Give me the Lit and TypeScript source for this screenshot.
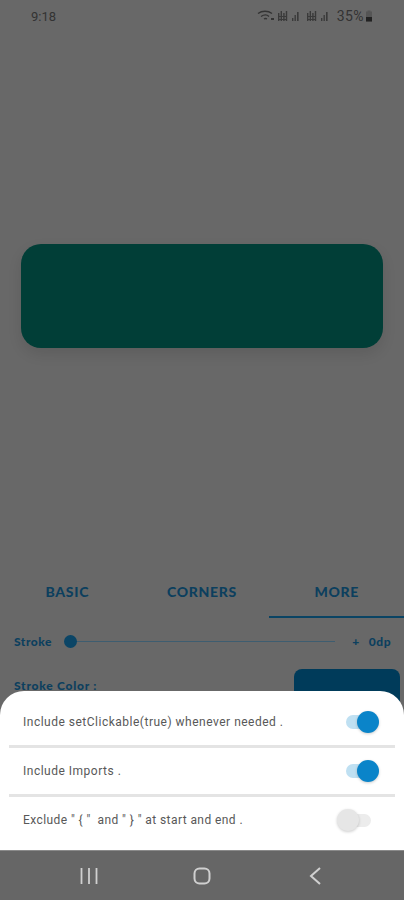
import { LitElement, html, css, svg } from "lit";
import { customElement } from "lit/decorators.js";

const bars = svg`<svg class="sig" viewBox="0 0 26 12" width="26" height="12">
  <g fill="#333" opacity=".85">
    <rect x="0" y="3" width="1.4" height="8"/><rect x="2.6" y="1" width="1.4" height="10"/><rect x="5.2" y="3" width="1.4" height="8"/><rect x="7.8" y="1" width="1.4" height="10"/>
    <rect x="0" y="6" width="9" height="1"/><rect x="0" y="9" width="9" height="1"/>
    <path d="M14 11h1.4V8H14zM16.5 11h1.4V5h-1.4zM19 11h1.6V2H19z"/>
  </g></svg>`;

@customElement("app-toggle")
class AppToggle extends LitElement {
  static properties = { on: { type: Boolean } };
  on = false;
  static styles = css`
    :host { display: block; width: 34px; height: 24px; position: relative; }
    .track { position: absolute; left: 1px; right: 1px; top: 5px; height: 14px; border-radius: 7px; background: #bfe0f2; }
    .knob { position: absolute; top: 1px; left: 12px; width: 22px; height: 22px; border-radius: 50%; background: #0a84c9; box-shadow: 0 1px 3px rgba(0,0,0,.2); }
    .off .track { background: #ececec; left: 3px; right: 0; top: 6px; height: 13px; }
    .off .knob { left: 0; background: #e6e6e6; top: 1px; }
  `;
  render() {
    return html`<div class=${this.on ? "on" : "off"}><div class="track"></div><div class="knob"></div></div>`;
  }
}

@customElement("app-root")
class AppRoot extends LitElement {
  static styles = css`
    :host { display: block; width: 404px; height: 900px; position: relative; overflow: hidden; background: #686868; font-family: "Lato", "Open Sans", sans-serif; }
    .page { display: flex; flex-direction: column; height: 900px; }
    .status { height: 32px; display: flex; align-items: center; justify-content: space-between; padding: 0 31px 0 31px; color: #333; font: 400 13px "Roboto", sans-serif; box-sizing: border-box; }
    .status .right { display: flex; align-items: center; gap: 3px; }
    .pct { font-size: 14px; letter-spacing: .4px; margin-left: 1px; margin-right: -2px; }
    .stage { height: 520px; padding-top: 212px; box-sizing: border-box; }
    .card { margin: 0 21px; height: 104px; border-radius: 20px; background: #013e37; box-shadow: 0 6px 14px rgba(0,0,0,.1); }
    .tabs { display: flex; height: 66px; }
    .tab { flex: 1; display: flex; align-items: flex-start; justify-content: center; padding-top: 31px; box-sizing: border-box; font-weight: 900; font-size: 14px; letter-spacing: .7px; color: #0c3f5e; border-bottom: 2px solid transparent; }
    .tab.active { border-bottom-color: #0a4464; }
    .strokeRow { display: flex; align-items: center; height: 22px; margin-top: 12px; padding: 0 13px 0 14px; color: #0c3f5e; font-weight: 900; font-size: 12px; letter-spacing: .5px; }
    .slider { flex: 1; position: relative; height: 1px; background: #3e5d70; margin: 0 17px 0 17px; }
    .thumb { position: absolute; left: -5px; top: -6px; width: 13px; height: 13px; border-radius: 50%; background: #0b4566; }
    .plus { margin-right: 9px; }
    .colorRow { display: flex; justify-content: space-between; padding: 17px 4px 0 14px; color: #0c3f5e; font-weight: 900; font-size: 12px; letter-spacing: .75px; }
    .colorRow span { padding-top: 9px; }
    .swatch { width: 106px; height: 60px; border-radius: 8px; background: #003b5a; }
    .sheet { position: absolute; left: 0; right: 0; top: 691px; height: 159px; background: #fff; border-radius: 24px 24px 0 0; box-sizing: border-box; padding: 0 9px; }
    .row { height: 46px; display: flex; align-items: center; justify-content: space-between; padding: 0 16px 0 14px; box-sizing: border-box; font: 400 12px "Roboto", sans-serif; letter-spacing: .5px; color: #585858; }
    .row.first { height: 54px; padding-top: 8px; }
    .row.last { padding-right: 24px; letter-spacing: .42px; }
    .rule { height: 3px; background: #e4e4e4; }
    .nav { position: absolute; left: 0; right: 0; top: 850px; height: 50px; background: #666; display: flex; align-items: center; justify-content: center; box-sizing: border-box; border-top: 1px solid #8a8a8a; }
    .nav div { width: 113px; display: flex; justify-content: center; }
    svg { display: block; }
  `;

  render() {
    return html`
      <div class="page">
        <div class="status">
          <span>9:18</span>
          <div class="right">
            <svg viewBox="0 0 18 12" width="18" height="12"><path d="M1 3.5C5 0.5 11 0.5 15 3.5M4 6.5C7 4.5 10 4.5 12 6.5M7 9C8 8.3 9 8.3 10 9" fill="none" stroke="#333" stroke-width="1.3"/><rect x="14" y="8" width="3" height="2" fill="#333"/></svg>
            ${bars}${bars}
            <span class="pct">35%</span>
            <svg viewBox="0 0 8 12" width="8" height="12"><path d="M2.5 0.5h3v1h1.5v10H1v-10h1.5z" fill="#555"/><rect x="1" y="7" width="6" height="4.500" fill="#222"/></svg>
          </div>
        </div>
        <div class="stage"><div class="card"></div></div>
        <div class="tabs">
          <div class="tab">BASIC</div>
          <div class="tab">CORNERS</div>
          <div class="tab active">MORE</div>
        </div>
        <div class="strokeRow">
          <span>Stroke</span>
          <div class="slider"><div class="thumb"></div></div>
          <span class="plus">+</span><span>0dp</span>
        </div>
        <div class="colorRow"><span>Stroke Color :</span><div class="swatch"></div></div>
      </div>
      <div class="sheet">
        <div class="row first"><span>Include setClickable(true) whenever needed .</span><app-toggle .on=${true}></app-toggle></div>
        <div class="rule"></div>
        <div class="row"><span>Include Imports .</span><app-toggle .on=${true}></app-toggle></div>
        <div class="rule"></div>
        <div class="row last"><span>Exclude " { " &nbsp;and " } " at start and end .</span><app-toggle .on=${false}></app-toggle></div>
      </div>
      <div class="nav">
        <div><svg viewBox="0 0 18 18" width="18" height="18"><path d="M1.500 1v16M9 1v16M16.500 1v16" stroke="#d0d0d0" stroke-width="1.800" fill="none"/></svg></div>
        <div><svg viewBox="0 0 18 18" width="18" height="18"><rect x="1.500" y="1.500" width="15" height="15" rx="5" stroke="#d0d0d0" stroke-width="2" fill="none"/></svg></div>
        <div><svg viewBox="0 0 14 18" width="14" height="18"><path d="M12 1L3 9l9 8" stroke="#d0d0d0" stroke-width="2" fill="none"/></svg></div>
      </div>
    `;
  }
}
